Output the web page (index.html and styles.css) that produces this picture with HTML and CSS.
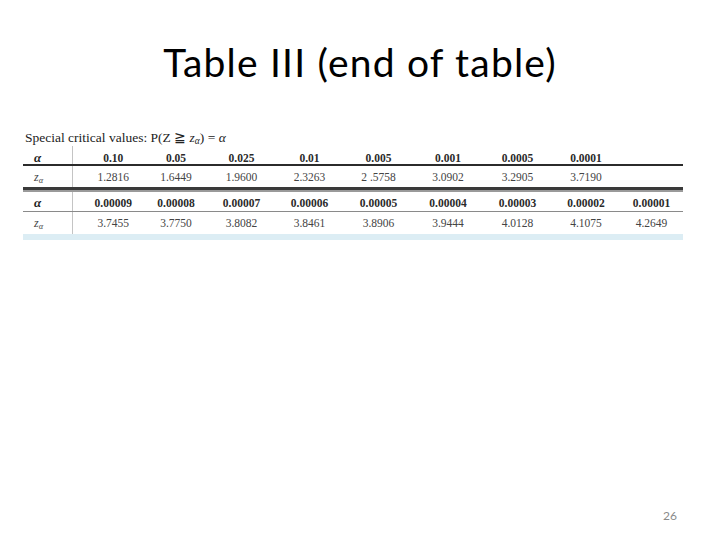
FILE: index.html
```html
<!DOCTYPE html>
<html>
<head>
<meta charset="utf-8">
<link rel="stylesheet" href="styles.css">
</head>
<body>
<div class="slide">
  <h1 class="title">Table III (end of table)</h1>
  <div class="tablewrap">
    <div class="caption">Special critical values: P(Z &#8807; <i>z</i><sub><i>α</i></sub>) = <i>α</i></div>
    <table class="crit">
      <colgroup>
        <col class="c0"><col class="c1"><col class="c2"><col class="c3"><col class="c4"><col class="c5"><col class="c6"><col class="c7"><col class="c8"><col class="c9">
      </colgroup>
      <tr class="hdr h1">
        <td class="lab alpha"><b><i>α</i></b></td>
        <td class="first">0.10</td><td>0.05</td><td>0.025</td><td>0.01</td><td>0.005</td><td>0.001</td><td>0.0005</td><td>0.0001</td><td></td>
      </tr>
      <tr class="val v1">
        <td class="lab"><i>z</i><sub><i>α</i></sub></td>
        <td class="first">1.2816</td><td>1.6449</td><td>1.9600</td><td>2.3263</td><td>2 .5758</td><td>3.0902</td><td>3.2905</td><td>3.7190</td><td></td>
      </tr>
      <tr class="sep"><td colspan="10"><div class="sep-dark"></div><div class="sep-gray"></div></td></tr>
      <tr class="hdr h2">
        <td class="lab alpha"><b><i>α</i></b></td>
        <td class="first">0.00009</td><td>0.00008</td><td>0.00007</td><td>0.00006</td><td>0.00005</td><td>0.00004</td><td>0.00003</td><td>0.00002</td><td>0.00001</td>
      </tr>
      <tr class="val v2">
        <td class="lab"><i>z</i><sub><i>α</i></sub></td>
        <td class="first">3.7455</td><td>3.7750</td><td>3.8082</td><td>3.8461</td><td>3.8906</td><td>3.9444</td><td>4.0128</td><td>4.1075</td><td>4.2649</td>
      </tr>
    </table>
    <div class="band"></div>
  </div>
  <div class="pagenum">26</div>
</div>
</body>
</html>
```
FILE: styles.css
```css
html, body {
  margin: 0;
  padding: 0;
  background: #ffffff;
}
.slide {
  width: 720px;
  height: 540px;
  position: relative;
  overflow: hidden;
}
.title {
  margin: 0;
  padding-top: 40px;
  height: 87px;
  box-sizing: border-box;
  font-family: Lato, "Liberation Sans", sans-serif;
  font-weight: 400;
  font-size: 39px;
  letter-spacing: 1.2px;
  line-height: 44px;
  text-align: center;
  color: #000;
}
.tablewrap {
  margin-left: 23px;
  width: 660px;
  margin-top: 42px;
  font-family: "Liberation Serif", serif;
  color: #333;
}
.caption {
  font-size: 13.5px;
  line-height: 17px;
  height: 17px;
  padding-left: 2px;
  color: #222;
}
.caption sub, .lab sub {
  font-size: 0.7em;
  vertical-align: -0.25em;
  line-height: 0;
}
.crit {
  border-collapse: collapse;
  table-layout: fixed;
  width: 660px;
  font-size: 11.5px;
  line-height: 12px;
}
.c0 { width: 49px; }
.c1 { width: 72px; }
.c2 { width: 64px; }
.c3 { width: 67px; }
.c4 { width: 69px; }
.c5 { width: 69px; }
.c6 { width: 70px; }
.c7 { width: 69px; }
.c8 { width: 68px; }
.c9 { width: 63px; }
.crit td {
  padding: 0;
  text-align: center;
  vertical-align: middle;
}
.crit td.first {
  padding-left: 10px;
}
.crit td.lab {
  text-align: left;
  padding-left: 11px;
  border-right: 1px solid #c4c4c4;
  color: #444;
  font-size: 12px;
}
.crit td.lab.alpha {
  color: #1e1e1e;
  font-size: 13px;
}
.hdr td {
  font-weight: bold;
  color: #2a2a2a;
}
.h1 td { height: 12px; padding-top: 6px; border-bottom: 2px solid #2b2b2b; }
.v1 td { height: 21px; color: #444; }
.h2 td { height: 17px; padding-top: 2px; border-bottom: 1px solid #8a8a8a; }
.v2 td { height: 22px; color: #444; }
.sep td {
  padding: 0;
  border: none;
}
.sep-dark { height: 3px; background: #3a3a3a; }
.sep-gray { height: 2px; background: #9a9a9a; }
.band {
  height: 6px;
  background: #dcedf4;
}
.pagenum {
  position: absolute;
  left: 663px;
  top: 508px;
  font-family: Lato, "Liberation Sans", sans-serif;
  font-size: 12px;
  color: #8a8a8a;
}
```
